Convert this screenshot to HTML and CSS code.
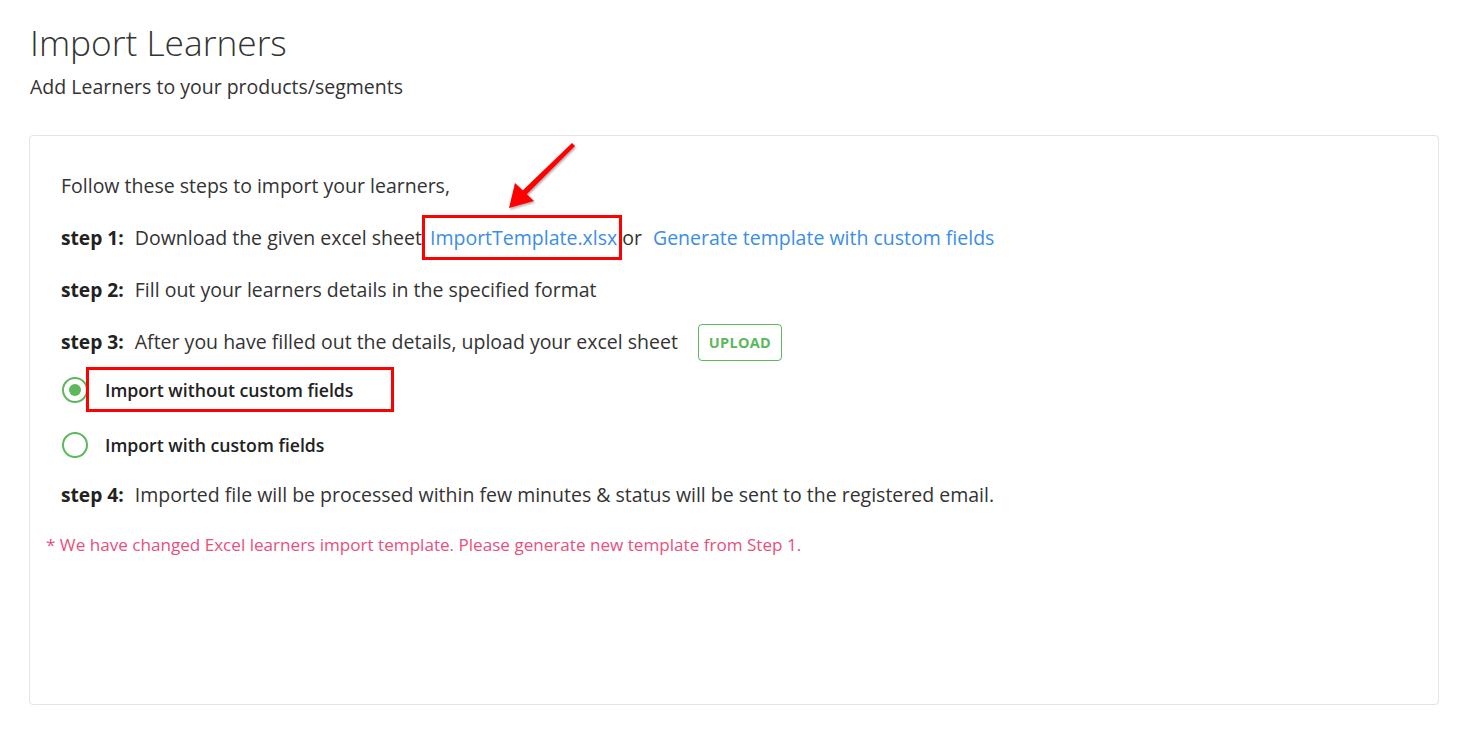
FILE: index.html
```html
<!DOCTYPE html>
<html>
<head>
<meta charset="utf-8">
<title>Import Learners</title>
<link rel="stylesheet" href="styles.css">
</head>
<body>
<div class="page">
  <header class="header">
    <h1 class="title">Import Learners</h1>
    <p class="subtitle">Add Learners to your products/segments</p>
  </header>
  <section class="card">
    <svg class="arrow" width="80" height="80" viewBox="0 0 80 80">
      <defs>
        <filter id="sh" x="-20%" y="-20%" width="140%" height="140%">
          <feDropShadow dx="1" dy="1.5" stdDeviation="1.2" flood-color="#000" flood-opacity="0.35"/>
        </filter>
      </defs>
      <g filter="url(#sh)" fill="#f00">
        <polygon points="69,4 72,7 21,58 17,54"/>
        <polygon points="6,69 12,44 31,62"/>
      </g>
    </svg>
    <div class="steps">
      <div class="row">Follow these steps to import your learners,</div>
      <div class="row"><span class="step">step 1:</span><span>Download the given excel sheet <span class="link boxed">ImportTemplate.xlsx</span> or <span class="link gen">Generate template with custom fields</span></span></div>
      <div class="row"><span class="step">step 2:</span><span>Fill out your learners details in the specified format</span></div>
      <div class="row row-3"><span class="step">step 3:</span><span>After you have filled out the details, upload your excel sheet</span><button class="upload">UPLOAD</button></div>
      <label class="radio-row">
        <span class="radio checked"></span>
        <span class="radio-label boxed-wide">Import without custom fields</span>
      </label>
      <label class="radio-row">
        <span class="radio"></span>
        <span class="radio-label">Import with custom fields</span>
      </label>
      <div class="row row-4"><span class="step">step 4:</span><span>Imported file will be processed within few minutes &amp; status will be sent to the registered email.</span></div>
    </div>
    <p class="note">* We have changed Excel learners import template. Please generate new template from Step 1.</p>
  </section>
</div>
</body>
</html>
```

FILE: styles.css
```css
* { box-sizing: border-box; }
html, body { margin: 0; padding: 0; background: #fff; }
body {
  font-family: "Open Sans", "Noto Sans", sans-serif;
  color: #333;
  width: 1476px;
  height: 741px;
  overflow: hidden;
}
.page {
  padding: 16px 37px 0 29px;
}
.header { padding-left: 1px; }
.title {
  margin: 0;
  font-size: 35.3px;
  font-weight: 300;
  line-height: 52px;
  color: #333;
}
.subtitle {
  margin: 6px 0 0;
  font-size: 19.5px;
  font-weight: 400;
  line-height: 26px;
  color: #333;
}
.card {
  position: relative;
  margin-top: 35px;
  width: 1410px;
  height: 570px;
  border: 1px solid #e4e4e4;
  border-radius: 4px;
  padding: 24px 0 0 0;
}
.arrow {
  position: absolute;
  left: 473px;
  top: 3px;
}
.steps {
  padding-left: 31px;
  display: flex;
  flex-direction: column;
}
.row {
  height: 52px;
  display: flex;
  align-items: center;
  font-size: 19.5px;
  line-height: 26px;
  color: #333;
  white-space: pre;
}
.row-3 { height: 46px; padding-top: 6px; }
.row-4 { height: 46px; }
.step {
  font-weight: 700;
  color: #222;
  margin-right: 11px;
  font-size: 19.2px;
}
.link { color: #3a8ee8; }
.gen { margin-left: 6px; }
.boxed { position: relative; margin-left: 3px; }
.boxed::after {
  content: "";
  position: absolute;
  left: -8px;
  right: -5px;
  top: -9px;
  bottom: -9px;
  border: 3px solid #f00;
}
.upload {
  margin-left: 20px;
  width: 84px;
  height: 37px;
  border: 1px solid #5cb85c;
  border-radius: 4px;
  background: #fff;
  color: #5cb85c;
  font-family: "Open Sans", sans-serif;
  font-weight: 700;
  font-size: 14.5px;
  letter-spacing: 0.3px;
  padding: 0;
}
.radio-row {
  height: 55px;
  display: flex;
  align-items: center;
  cursor: pointer;
}
.radio {
  width: 26px;
  height: 26px;
  border-radius: 50%;
  border: 2.5px solid #5cb85c;
  margin-left: 1px;
  display: flex;
  align-items: center;
  justify-content: center;
}
.radio.checked::after {
  content: "";
  width: 12px;
  height: 12px;
  border-radius: 50%;
  background: #5cb85c;
}
.radio-label {
  margin-left: 17px;
  font-size: 17.7px;
  font-weight: 600;
  color: #222;
  position: relative;
}
.boxed-wide::after {
  content: "";
  position: absolute;
  left: -19px;
  right: -41px;
  top: -11px;
  bottom: -10px;
  border: 3px solid #f00;
}
.note {
  margin: 0;
  padding-left: 16px;
  height: 52px;
  display: flex;
  align-items: center;
  font-size: 17.1px;
  color: #e8507c;
}
```
